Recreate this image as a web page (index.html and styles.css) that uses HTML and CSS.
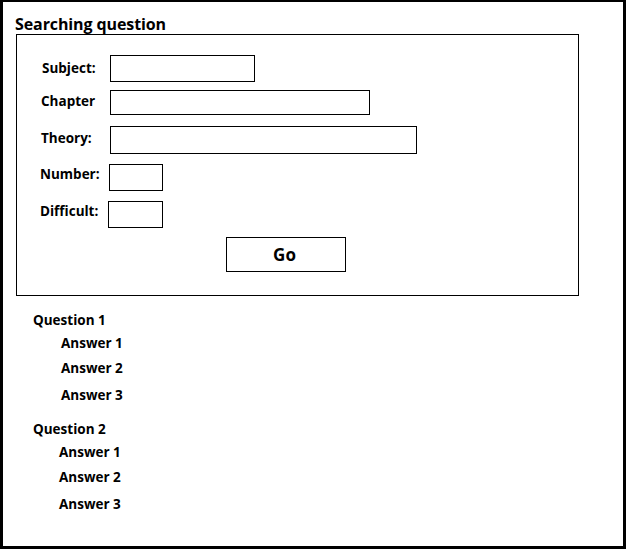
FILE: index.html
```html
<!DOCTYPE html>
<html>
<head>
<meta charset="utf-8">
<title>Searching question</title>
<link rel="stylesheet" href="styles.css">
</head>
<body>
<div class="frame">
  <h1 class="title">Searching question</h1>
  <form class="search">
    <div class="row row-subject">
      <label class="label">Subject:</label>
      <div class="field field-subject"></div>
    </div>
    <div class="row row-chapter">
      <label class="label">Chapter</label>
      <div class="field field-chapter"></div>
    </div>
    <div class="row row-theory">
      <label class="label">Theory:</label>
      <div class="field field-theory"></div>
    </div>
    <div class="row row-number">
      <label class="label">Number:</label>
      <div class="field field-number"></div>
    </div>
    <div class="row row-difficult">
      <label class="label">Difficult:</label>
      <div class="field field-difficult"></div>
    </div>
    <div class="actions">
      <button type="button" class="go">Go</button>
    </div>
  </form>
  <div class="results">
    <div class="question q1">Question 1</div>
    <div class="answer a1">Answer 1</div>
    <div class="answer a2">Answer 2</div>
    <div class="answer a3">Answer 3</div>
    <div class="question q2">Question 2</div>
    <div class="answer answer-b a1">Answer 1</div>
    <div class="answer answer-b a2">Answer 2</div>
    <div class="answer answer-b a3">Answer 3</div>
  </div>
</div>
</body>
</html>
```

FILE: styles.css
```css
html, body {
  margin: 0;
  padding: 0;
  background: #fff;
}
body {
  font-family: "Open Sans", Lato, "Liberation Sans", sans-serif;
  font-weight: 700;
  color: #000;
  font-variant-ligatures: none;
}
.frame {
  box-sizing: border-box;
  width: 626px;
  height: 549px;
  border: 3px solid #000;
  border-top-width: 2px;
  overflow: hidden;
}
.title {
  margin: 0;
  padding: 12px 0 0 12px;
  height: 20px;
  font-size: 16px;
  line-height: 20px;
  font-weight: 700;
  letter-spacing: -0.1px;
}
.search {
  box-sizing: border-box;
  margin: 0 0 0 13px;
  width: 563px;
  height: 262px;
  border: 1px solid #000;
  padding: 20px 0 0 24px;
  display: flex;
  flex-direction: column;
}
.row {
  display: flex;
  align-items: flex-start;
}
.label {
  font-size: 13.5px;
  line-height: 16px;
  width: 69px;
  flex: none;
}
.field {
  box-sizing: border-box;
  border: 1px solid #000;
  flex: none;
}
.row-subject .label { margin-top: 5px; margin-left: 1px; width: 68px; }
.row-chapter { margin-top: 8px; }
.row-chapter .label { margin-top: 3px; }
.row-theory { margin-top: 11px; }
.row-theory .label { margin-top: 4px; }
.row-number { margin-top: 10px; }
.row-number .label { margin-top: 2px; margin-left: -1px; }
.row-difficult { margin-top: 10px; }
.row-difficult .label { margin-top: 2px; margin-left: -1px; width: 68px; }

.field-subject { width: 145px; height: 27px; }
.field-chapter { width: 260px; height: 25px; }
.field-theory { width: 307px; height: 28px; }
.field-number { width: 54px; height: 27px; }
.field-difficult { width: 55px; height: 27px; }

.actions {
  margin-top: 9px;
  padding-left: 185px;
}
.go {
  box-sizing: border-box;
  width: 120px;
  height: 35px;
  border: 1px solid #000;
  background: #fff;
  font-family: inherit;
  font-weight: 700;
  font-size: 17px;
  color: #000;
  padding: 0 3px 0 0;
  margin: 0;
}

.results {
  padding-left: 30px;
}
.question, .answer {
  font-size: 13.5px;
  line-height: 16px;
}
.answer { padding-left: 28px; }
.answer-b { padding-left: 26px; }
.q1 { margin-top: 16px; }
.a1 { margin-top: 7px; }
.a2 { margin-top: 9px; }
.a3 { margin-top: 11px; }
.q2 { margin-top: 18px; }
.answer-b.a1 { margin-top: 7px; }
```
